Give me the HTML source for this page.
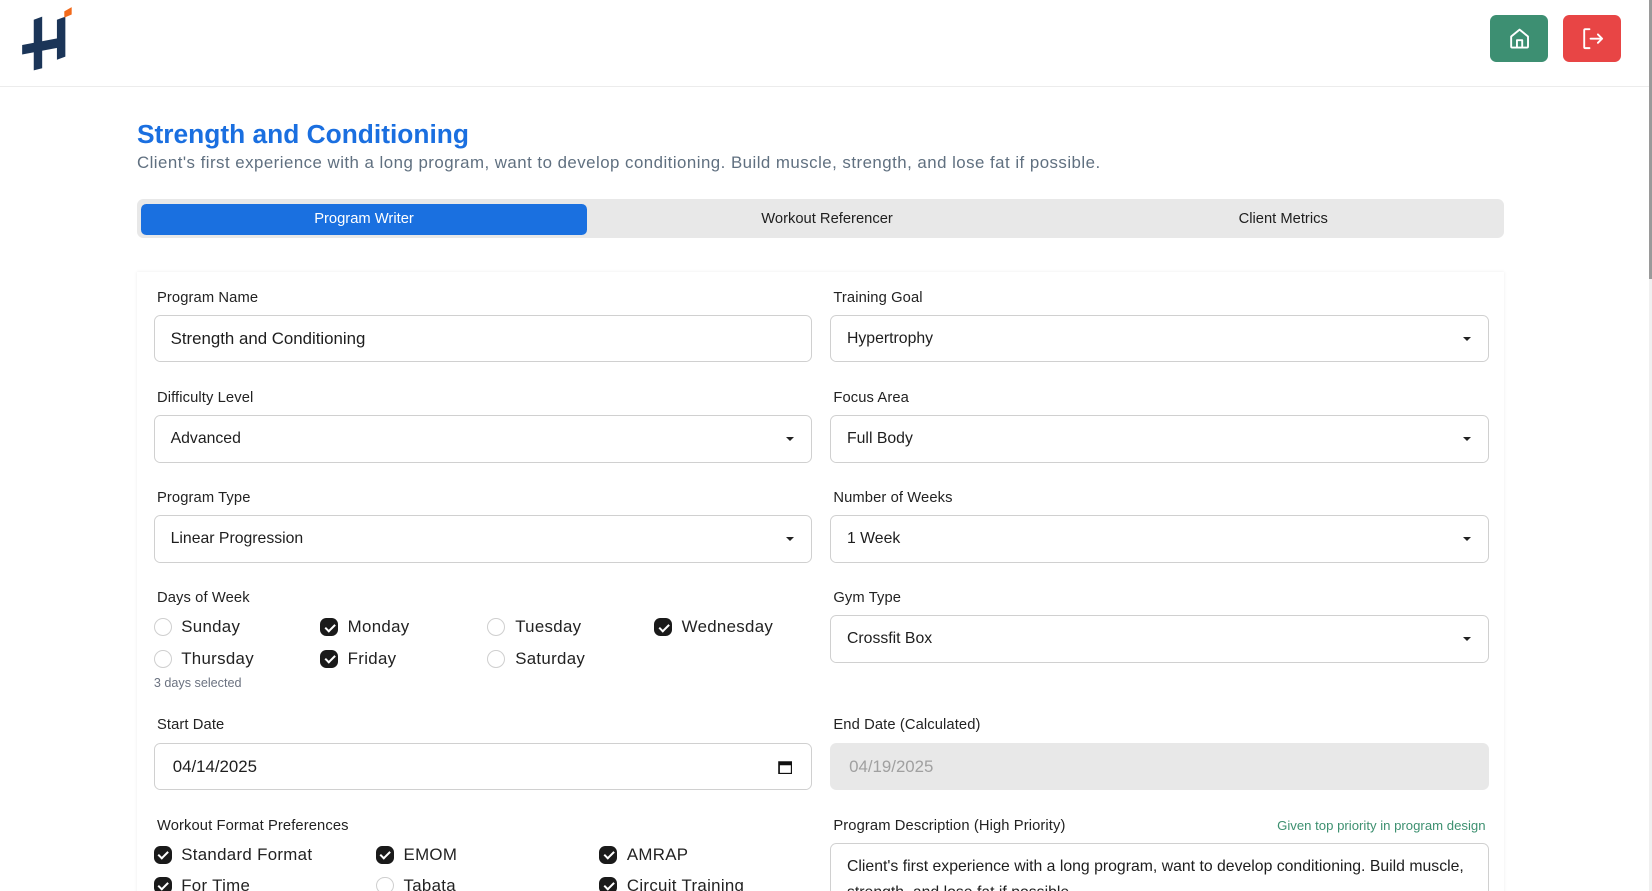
<!DOCTYPE html>
<html><head><meta charset="utf-8"><style>
html,body{margin:0;padding:0;background:#fff;overflow:hidden}
body{width:1652px;height:891px}
#w{position:relative;width:1568px;height:846px;zoom:1.05357;font-family:"Liberation Sans",sans-serif;color:#1e1e1e}
.a{position:absolute}
.lbl{position:absolute;font-size:14px;color:#222;margin-top:2px;letter-spacing:0.1px}
.inp{position:absolute;width:625px;height:45px;box-sizing:border-box;border:1px solid #d0d0d0;border-radius:6px;background:#fff;font-size:15px;line-height:43px;padding-left:15px}
.inp .car{position:absolute;right:16px;top:20px;width:0;height:0;border-left:4px solid transparent;border-right:4px solid transparent;border-top:4px solid #222}
.cb{position:absolute;width:17px;height:17px;box-sizing:border-box;border:1px solid #cfcfcf;border-radius:50%;background:#fff}
.cb.on{background:#1a1a1a;border-color:#1a1a1a;border-radius:6px}
.cb.on:after{content:"";position:absolute;left:5px;top:2px;width:4px;height:8px;border:solid #fff;border-width:0 2px 2px 0;transform:rotate(45deg)}
.ct{position:absolute;font-size:16px;color:#222;letter-spacing:0.3px}
</style></head><body><div id="w">
<svg class="a" style="left:18px;top:5px" width="52" height="64" viewBox="0 0 52 64">
<path d="M14 14 L22 11 L22 60 L14 62 Z" fill="#1b3558"/>
<path d="M36 14 L44 11 L44 49 L36 52 Z" fill="#1b3558"/>
<path d="M3 38 L40 31 L40 40 L3 47 Z" fill="#1b3558"/>
<path d="M43 6 L50 2 L50 9 L43 12 Z" fill="#f26a1b"/>
</svg>
<div class="a" style="left:0;top:82px;width:1566px;height:1px;background:#ececec"></div>
<div class="a" style="left:1414px;top:14px;width:55px;height:45px;border-radius:6px;background:#3d8f72"></div>
<svg class="a" style="left:1431px;top:26px" width="22" height="22" viewBox="0 0 22 22" fill="none" stroke="#fff" stroke-width="1.8" stroke-linejoin="round"><path d="M3 9 L11 2.5 L19 9 V18.5 a1 1 0 0 1 -1 1 H4 a1 1 0 0 1 -1 -1 Z"/><path d="M8.5 19.5 V12.5 H13.5 V19.5"/></svg>
<div class="a" style="left:1484px;top:14px;width:55px;height:45px;border-radius:6px;background:#e84545"></div>
<svg class="a" style="left:1500px;top:25px" width="24" height="24" viewBox="0 0 24 24" fill="none" stroke="#fff" stroke-width="1.8" stroke-linecap="round" stroke-linejoin="round"><path d="M9 3 H5 a1 1 0 0 0 -1 1 V20 a1 1 0 0 0 1 1 H9"/><path d="M10 12 H21 M17 8 L21 12 L17 16"/></svg>
<div class="a" style="left:1565px;top:0;width:3px;height:846px;background:#f0f0f0"></div>
<div class="a" style="left:1565px;top:0;width:3px;height:265px;background:#9a9a9a"></div>
<div class="a" style="left:130px;top:113px;font-size:25px;font-weight:bold;color:#1a6fe0;letter-spacing:0px">Strength and Conditioning</div>
<div class="a" style="left:130px;top:145px;font-size:16px;color:#607080;letter-spacing:0.45px">Client's first experience with a long program, want to develop conditioning. Build muscle, strength, and lose fat if possible.</div>
<div class="a" style="left:130px;top:189px;width:1298px;height:37px;border-radius:6px;background:#e8e8e8"></div>
<div class="a" style="left:134px;top:193px;width:423px;height:29px;border-radius:5px;background:#1a70e0;color:#fff;font-size:14px;text-align:center;line-height:29px;margin-top:1px">Program Writer</div>
<div class="a" style="left:570px;top:194px;width:430px;line-height:29px;text-align:center;font-size:14px">Workout Referencer</div>
<div class="a" style="left:1004px;top:194px;width:428px;line-height:29px;text-align:center;font-size:14px">Client Metrics</div>
<div class="a" style="left:130px;top:258px;width:1298px;height:600px;background:#fff;box-shadow:0 0 3px rgba(0,0,0,0.08)"></div>
<div class="lbl" style="left:149px;top:273px">Program Name</div>
<div class="inp" style="left:146px;top:299px;font-size:16px">Strength and Conditioning</div>
<div class="lbl" style="left:791px;top:273px">Training Goal</div>
<div class="inp" style="left:788px;top:299px">Hypertrophy<span class="car"></span></div>
<div class="lbl" style="left:149px;top:368px">Difficulty Level</div>
<div class="inp" style="left:146px;top:394px">Advanced<span class="car"></span></div>
<div class="lbl" style="left:791px;top:368px">Focus Area</div>
<div class="inp" style="left:788px;top:394px">Full Body<span class="car"></span></div>
<div class="lbl" style="left:149px;top:463px">Program Type</div>
<div class="inp" style="left:146px;top:489px">Linear Progression<span class="car"></span></div>
<div class="lbl" style="left:791px;top:463px">Number of Weeks</div>
<div class="inp" style="left:788px;top:489px">1 Week<span class="car"></span></div>
<div class="lbl" style="left:149px;top:558px">Days of Week</div>
<div class="cb" style="left:146px;top:587px"></div><div class="ct" style="left:172px;top:586px">Sunday</div>
<div class="cb on" style="left:304px;top:587px"></div><div class="ct" style="left:330px;top:586px">Monday</div>
<div class="cb" style="left:462px;top:587px"></div><div class="ct" style="left:489px;top:586px">Tuesday</div>
<div class="cb on" style="left:621px;top:587px"></div><div class="ct" style="left:647px;top:586px">Wednesday</div>
<div class="cb" style="left:146px;top:617px"></div><div class="ct" style="left:172px;top:616px">Thursday</div>
<div class="cb on" style="left:304px;top:617px"></div><div class="ct" style="left:330px;top:616px">Friday</div>
<div class="cb" style="left:462px;top:617px"></div><div class="ct" style="left:489px;top:616px">Saturday</div>
<div class="a" style="left:146px;top:642px;font-size:12px;color:#6b7280">3 days selected</div>
<div class="lbl" style="left:791px;top:558px">Gym Type</div>
<div class="inp" style="left:788px;top:584px">Crossfit Box<span class="car"></span></div>
<div class="lbl" style="left:149px;top:679px">Start Date</div>
<div class="inp" style="left:146px;top:705px;font-size:16px;padding-left:17px">04/14/2025
<svg class="a" style="right:18px;top:15px" width="14" height="14" viewBox="0 0 14 14"><rect x="1" y="2" width="12" height="11" fill="none" stroke="#111" stroke-width="1.6"/><rect x="1" y="2" width="12" height="3" fill="#111"/></svg></div>
<div class="lbl" style="left:791px;top:679px">End Date (Calculated)</div>
<div class="inp" style="left:788px;top:705px;background:#e8e8e8;border-color:#e8e8e8;color:#a0a0a0;font-size:16px;padding-left:17px">04/19/2025</div>
<div class="lbl" style="left:149px;top:774px">Workout Format Preferences</div>
<div class="cb on" style="left:146px;top:803px"></div><div class="ct" style="left:172px;top:802px">Standard Format</div>
<div class="cb on" style="left:357px;top:803px"></div><div class="ct" style="left:383px;top:802px">EMOM</div>
<div class="cb on" style="left:569px;top:803px"></div><div class="ct" style="left:595px;top:802px">AMRAP</div>
<div class="cb on" style="left:146px;top:832px"></div><div class="ct" style="left:172px;top:831px">For Time</div>
<div class="cb" style="left:357px;top:832px"></div><div class="ct" style="left:383px;top:831px">Tabata</div>
<div class="cb on" style="left:569px;top:832px"></div><div class="ct" style="left:595px;top:831px">Circuit Training</div>
<div class="lbl" style="left:791px;top:774px">Program Description (High Priority)</div>
<div class="a" style="left:1100px;width:310px;text-align:right;top:776px;font-size:12.5px;color:#3d9070">Given top priority in program design</div>
<div class="a" style="left:788px;top:800px;width:625px;height:80px;box-sizing:border-box;border:1px solid #d0d0d0;border-radius:6px;padding:10px 15px;font-size:15px;line-height:24px">Client's first experience with a long program, want to develop conditioning. Build muscle, strength, and lose fat if possible.</div>
</div></body></html>
